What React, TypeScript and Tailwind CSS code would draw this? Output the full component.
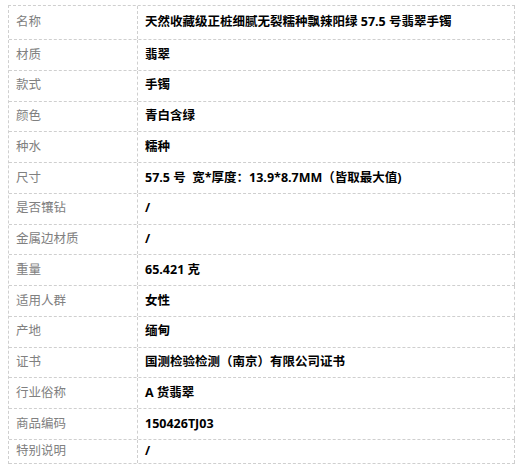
import React from "react";

const rows: [string, string][] = [
  ["名称", "天然收藏级正桩细腻无裂糯种飘辣阳绿 57.5 号翡翠手镯"],
  ["材质", "翡翠"],
  ["款式", "手镯"],
  ["颜色", "青白含绿"],
  ["种水", "糯种"],
  ["尺寸", "57.5 号  宽*厚度：13.9*8.7MM（皆取最大值)"],
  ["是否镶钻", "/"],
  ["金属边材质", "/"],
  ["重量", "65.421 克"],
  ["适用人群", "女性"],
  ["产地", "缅甸"],
  ["证书", "国测检验检测（南京）有限公司证书"],
  ["行业俗称", "A 货翡翠"],
  ["商品编码", "150426TJ03"],
  ["特别说明", "/"],
];

export default function App() {
  return (
    <div
      className="w-[520px] h-[472px] bg-white pt-[5px] pl-[8px]"
      style={{ fontFamily: '"Open Sans", "Noto Sans CJK SC", sans-serif' }}
    >
      <div className="w-[507px] border-t border-l border-dashed border-[#cfcfcf] flex flex-col">
        {rows.map(([k, v], i) => (
          <div
            key={k}
            className={
              "flex border-b border-dashed border-[#cfcfcf] " +
              (i === 0 ? "h-[34px]" : i === rows.length - 1 ? "h-[24px]" : "h-[30.77px]")
            }
          >
            <div className="w-[129px] shrink-0 border-r border-dashed border-[#cfcfcf] flex items-center pl-[7px] text-[12.5px] text-[#808080]">
              {k}
            </div>
            <div className="flex-1 border-r border-dashed border-[#cfcfcf] flex items-center pl-[7px] text-[12.5px] font-bold text-[#000] whitespace-pre">
              {v}
            </div>
          </div>
        ))}
      </div>
    </div>
  );
}
